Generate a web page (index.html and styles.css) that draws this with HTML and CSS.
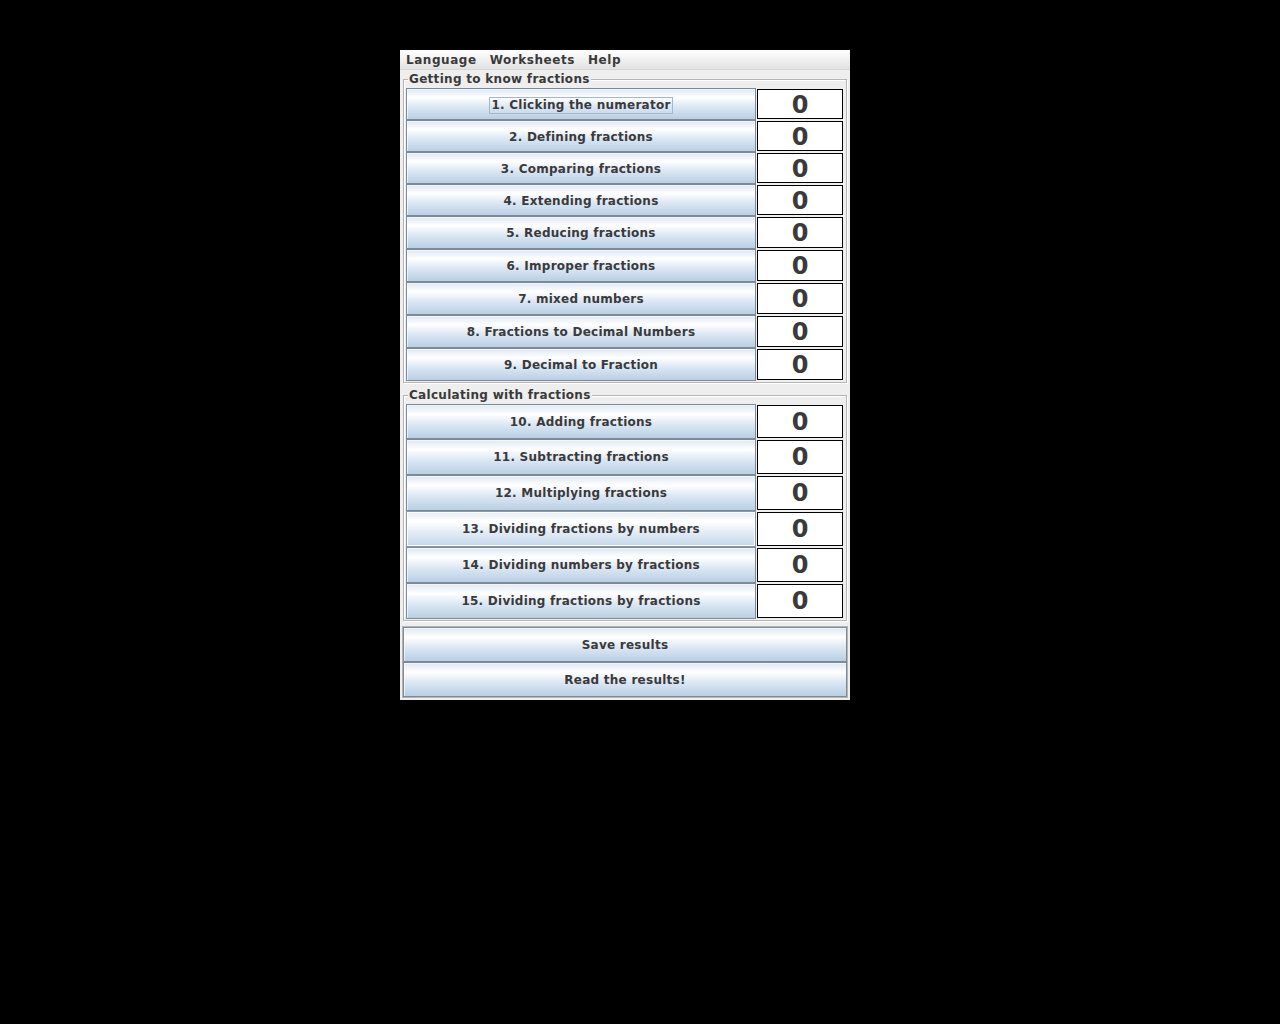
FILE: index.html
```html
<!DOCTYPE html>
<html>
<head>
<meta charset="utf-8">
<title>Fractions</title>
<link rel="stylesheet" href="styles.css">
</head>
<body>
<div class="window">
  <div class="menubar">
    <span class="menu">Language</span>
    <span class="menu">Worksheets</span>
    <span class="menu">Help</span>
  </div>

  <fieldset class="group group-know">
    <legend>Getting to know fractions</legend>
    <div class="rows">
      <div class="row r32"><button class="btn focused"><span class="focus">1. Clicking the numerator</span></button><div class="score">0</div></div>
      <div class="row r32"><button class="btn">2. Defining fractions</button><div class="score">0</div></div>
      <div class="row r32"><button class="btn">3. Comparing fractions</button><div class="score">0</div></div>
      <div class="row r32"><button class="btn">4. Extending fractions</button><div class="score">0</div></div>
      <div class="row r33"><button class="btn">5. Reducing fractions</button><div class="score">0</div></div>
      <div class="row r33"><button class="btn">6. Improper fractions</button><div class="score">0</div></div>
      <div class="row r33"><button class="btn">7. mixed numbers</button><div class="score">0</div></div>
      <div class="row r33"><button class="btn">8. Fractions to Decimal Numbers</button><div class="score">0</div></div>
      <div class="row r33"><button class="btn">9. Decimal to Fraction</button><div class="score">0</div></div>
    </div>
  </fieldset>

  <fieldset class="group group-calc">
    <legend>Calculating with fractions</legend>
    <div class="rows">
      <div class="row r35"><button class="btn">10. Adding fractions</button><div class="score">0</div></div>
      <div class="row r36"><button class="btn">11. Subtracting fractions</button><div class="score">0</div></div>
      <div class="row r36"><button class="btn">12. Multiplying fractions</button><div class="score">0</div></div>
      <div class="row r36"><button class="btn hover">13. Dividing fractions by numbers</button><div class="score">0</div></div>
      <div class="row r36"><button class="btn">14. Dividing numbers by fractions</button><div class="score">0</div></div>
      <div class="row r36"><button class="btn">15. Dividing fractions by fractions</button><div class="score">0</div></div>
    </div>
  </fieldset>

  <div class="actions">
    <button class="btn wide">Save results</button>
    <button class="btn wide">Read the results!</button>
  </div>
</div>
</body>
</html>
```

FILE: styles.css
```css
html, body {
  margin: 0;
  padding: 0;
  background: #000;
}

body {
  font-family: "DejaVu Sans", "Liberation Sans", sans-serif;
  font-size: 12px;
  color: #333;
}

.window {
  margin: 50px 0 0 400px;
  width: 450px;
  height: 650px;
  background: #eeeeee;
  display: flex;
  flex-direction: column;
}

.menubar {
  height: 19px;
  background: linear-gradient(#ffffff, #e2e2e2);
  border-bottom: 1px solid #d6d6d6;
  display: flex;
  align-items: center;
  padding-left: 6px;
  gap: 13px;
}

.menu {
  font-weight: bold;
  font-size: 12px;
  letter-spacing: 0.55px;
  color: #3a3a3a;
}

.group {
  margin: 2px 3px 0 3px;
  padding: 2px 3px 1px 2px;
  border: 1px solid #b5b5b5;
  box-shadow: inset 1px 1px 0 #fff, 1px 1px 0 #fff;
  min-width: 0;
}

.group-calc {
  margin-top: 5px;
  padding-bottom: 1px;
}

.group legend {
  padding: 0 1px;
  margin-left: 2px;
  font-size: 12px;
  line-height: 14px;
  font-weight: bold;
  letter-spacing: 0.3px;
  color: #3a3a3a;
  background: #eeeeee;
}

.rows {
  display: flex;
  flex-direction: column;
}

.row {
  display: flex;
  gap: 1px;
}

.r32 { height: 32px; }
.r33 { height: 33px; }
.r35 { height: 35px; }
.r36 { height: 36px; }

.r32 .btn,
.r32 .score {
  padding-top: 2px;
}

.btn {
  font-family: "DejaVu Sans", "Liberation Sans", sans-serif;
  font-size: 12px;
  font-weight: bold;
  letter-spacing: 0.25px;
  color: #3a3a3a;
  border: 1px solid #7a8a99;
  background: linear-gradient(#dde8f3 0%, #ffffff 28%, #dde8f3 58%, #b8cfe5 100%);
  box-shadow: inset 1px 1px 0 rgba(255,255,255,0.6);
  margin: 0;
  padding: 0;
  width: 350px;
  height: 100%;
  display: flex;
  align-items: center;
  justify-content: center;
  cursor: default;
}

.btn.hover {
  border-color: #8a99a8;
  box-shadow: inset 0 0 0 1px #ffffff;
  background: linear-gradient(#e4edf6 0%, #ffffff 28%, #e4edf6 58%, #c5d8ea 100%);
}

.focus {
  border: 1px solid #a3b8cc;
  padding: 0 1px;
  line-height: 15px;
}

.score {
  width: 84px;
  margin: 1px 0;
  border: 1px solid #000;
  background: #fff;
  display: flex;
  align-items: center;
  justify-content: center;
  font-family: "DejaVu Sans", sans-serif;
  font-weight: bold;
  font-size: 24px;
  color: #3a3a3a;
}

.actions {
  margin: 5px 2px 0 2px;
  padding: 0;
  border: 1px solid #b5b5b5;
  box-shadow: inset 1px 1px 0 #fff;
  display: flex;
  flex-direction: column;
}

.btn.wide {
  width: 100%;
  height: 35px;
}
```
